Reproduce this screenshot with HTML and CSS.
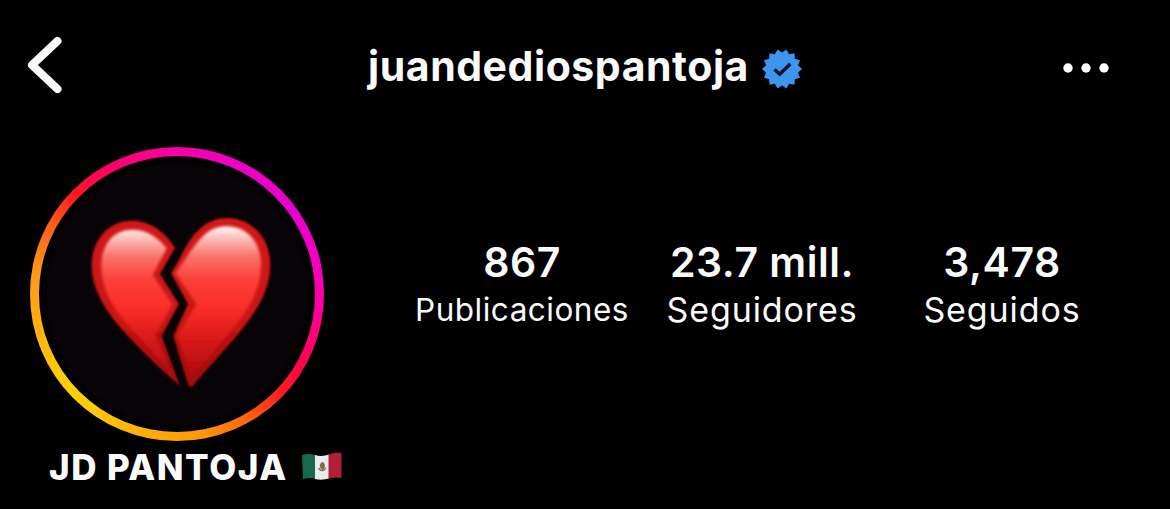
FILE: index.html
```html
<!DOCTYPE html>
<html lang="es">
<head>
    <meta charset="UTF-8" />
    <meta name="viewport" content="width=device-width, initial-scale=1.0" />
    <title>juandediospantoja</title>
    <link rel="stylesheet" href="styles.css">
</head>
<body>
    <header class="topbar">
        <svg class="back" viewBox="0 0 36 60" width="36" height="60">
            <path d="M30.5 6 L5 30 L30.5 54" fill="none" stroke="#fafafa" stroke-width="8" stroke-linecap="round" stroke-linejoin="round" />
        </svg>
        <div class="account">
            <h1 class="username">juandediospantoja</h1>
            <svg class="verified" viewBox="-20 -20 40 40" width="40" height="40">
                <path fill="#3c96f0" d="M0 -16.4 L4.45 -19.5 L7.12 -14.78 L12.47 -15.64 L12.82 -10.23 L18.02 -8.68 L15.99 -3.65 L20 0 L15.99 3.65 L18.02 8.68 L12.82 10.23 L12.47 15.64 L7.12 14.78 L4.45 19.5 L0 16.4 L-4.45 19.5 L-7.12 14.78 L-12.47 15.64 L-12.82 10.23 L-18.02 8.68 L-15.99 3.65 L-20 0 L-15.99 -3.65 L-18.02 -8.68 L-12.82 -10.23 L-12.47 -15.64 L-7.12 -14.78 L-4.45 -19.5 Z" />
                <path d="M-7.5 0.5 L-2.3 5.2 L8.3 -5" fill="none" stroke="#04101c" stroke-width="3.4" />
            </svg>
        </div>
        <svg class="more" viewBox="0 0 48 12" width="48" height="12">
            <circle cx="6" cy="6" r="4.7" fill="#fff" />
            <circle cx="24" cy="6" r="4.7" fill="#fff" />
            <circle cx="42" cy="6" r="4.7" fill="#fff" />
        </svg>
    </header>

    <main class="profile">
        <div class="avatar">
            <svg class="photo" viewBox="-123 -147 828 828">
                <defs>
                    <linearGradient id="edge" x1="0" y1="40" x2="0" y2="545" gradientUnits="userSpaceOnUse">
                        <stop offset="0" stop-color="#d31a15" />
                        <stop offset="0.6" stop-color="#c91412" />
                        <stop offset="1" stop-color="#a00808" />
                    </linearGradient>
                    <linearGradient id="body" x1="0" y1="65" x2="0" y2="530" gradientUnits="userSpaceOnUse">
                        <stop offset="0" stop-color="#fff4f2" />
                        <stop offset="0.09" stop-color="#fab4ae" />
                        <stop offset="0.2" stop-color="#fa6f67" />
                        <stop offset="0.34" stop-color="#fb4039" />
                        <stop offset="0.54" stop-color="#f92b27" />
                        <stop offset="0.72" stop-color="#d91a18" />
                        <stop offset="1" stop-color="#a80a0a" />
                    </linearGradient>
                    <filter id="soft" x="-10%" y="-10%" width="120%" height="120%">
                        <feGaussianBlur stdDeviation="5" />
                    </filter>
                    <filter id="trim" x="-10%" y="-10%" width="120%" height="120%">
                        <feGaussianBlur stdDeviation="3" />
                    </filter>
                </defs>
                <g fill="url(#edge)" filter="url(#trim)">
                    <path d="M285 128 C252 78 210 47 155 47 C85 47 35 105 35 182 C35 250 75 315 125 372 C175 430 240 490 300 544 L245 392 L297 297 L240 208 Z" />
                    <path d="M273 205 C290 180 295 165 312 136 C345 75 385 39 440 39 C515 39 571 98 571 180 C571 250 535 310 492 365 C445 425 390 480 335 547 L325 542 L280 393 L324 297 Z" />
                </g>
                <g fill="url(#body)" filter="url(#soft)">
                    <path d="M260 130 C232 95 200 74 156 74 C100 74 64 118 64 184 C64 245 92 300 136 350 C175 396 225 445 272 500 L226 390 L277 297 L218 210 Z" />
                    <path d="M286 204 C318 160 330 140 348 118 C375 82 400 64 440 64 C500 64 543 110 543 180 C543 240 515 300 475 350 C435 402 385 455 336 515 L292 393 L350 297 Z" />
                </g>
            </svg>
        </div>

        <ul class="stats">
            <li class="stat posts">
                <span class="count">867</span>
                <span class="label">Publicaciones</span>
            </li>
            <li class="stat followers">
                <span class="count">23.7 mill.</span>
                <span class="label">Seguidores</span>
            </li>
            <li class="stat following">
                <span class="count">3,478</span>
                <span class="label">Seguidos</span>
            </li>
        </ul>
    </main>

    <div class="bio">
        <h2 class="name">JD PANTOJA</h2>
        <svg class="flag" viewBox="0 0 40 30" width="40" height="30">
            <path fill="#17694f" d="M0 3 Q7 1 14 3 L14 27 Q7 25 1 27 Z" />
            <path fill="#ececec" d="M13 3 Q20 5 27 2.5 L27 26.5 Q20 28.5 13 27 Z" />
            <path fill="#b01e38" d="M26.5 2.5 Q33 0 39.5 1 L39.5 26 Q33 25 26.5 26.5 Z" />
            <path fill="none" stroke="#6b8a4a" stroke-width="1.5" d="M16.5 16 Q20 21 24 16" />
            <path fill="#8a6a48" d="M18 12 Q21 8 22.5 12 Q24 16 20.5 18 Q17 16 18 12 Z" />
        </svg>
    </div>
</body>
</html>
```
FILE: styles.css
```css
body {
    margin: 0;
    background-color: #000;
    color: #fafafa;
    font-family: Inter, "Liberation Sans", sans-serif;
}
h1, h2, ul {
    margin: 0;
    padding: 0;
}
.topbar {
    display: grid;
    grid-template-columns: 340px 1fr 340px;
    align-items: center;
    height: 137px;
}
.back {
    margin-left: 27px;
    margin-bottom: 7px;
}
.account {
    display: flex;
    align-items: center;
    justify-content: center;
    gap: 13px;
    white-space: nowrap;
}
.username {
    margin-bottom: 5px;
    font-size: 41px;
    font-weight: 700;
    line-height: 50px;
    letter-spacing: 0.55px;
}
.verified {
    flex: none;
}
.more {
    justify-self: end;
    margin-right: 60px;
    margin-bottom: 1px;
}
.profile {
    display: flex;
    padding: 10px 0 0 30px;
}
.avatar {
    box-sizing: border-box;
    width: 294px;
    height: 294px;
    padding: 9px;
    border-radius: 50%;
    background: conic-gradient(#f500a8, #ee00c4 25deg, #e600cf 55deg, #f400b8 80deg, #ff00a0 95deg, #ff0050 118deg, #ff1a20 133deg, #ff6210 150deg, #ff9a08 172deg, #ffb008 195deg, #ffcc08 218deg, #ffd008 232deg, #ffb010 255deg, #ff9a18 278deg, #ff5a18 300deg, #ff1424 315deg, #ff0068 332deg, #f500a8);
}
.photo {
    display: block;
    width: 276px;
    height: 276px;
    border-radius: 50%;
    background: radial-gradient(#070307 66%, #000 69%);
}
.stats {
    display: flex;
    padding: 90px 0 0 92px;
    list-style: none;
}
.stat {
    display: flex;
    flex-direction: column;
    align-items: center;
    white-space: nowrap;
}
.posts {
    width: 212px;
    margin-right: 37px;
}
.followers {
    width: 194px;
    margin-right: 64px;
}
.following {
    width: 158px;
}
.count {
    font-size: 41px;
    font-weight: 600;
    line-height: 50px;
    letter-spacing: 0.5px;
}
.label {
    margin-top: 2px;
    font-size: 34px;
    line-height: 42px;
    letter-spacing: 0.9px;
}
.posts .label {
    font-size: 31.5px;
    letter-spacing: 0.5px;
}
.bio {
    display: flex;
    align-items: center;
    gap: 14px;
    padding: 5px 0 0 49px;
}
.name {
    font-size: 35px;
    font-weight: 800;
    line-height: 42px;
    letter-spacing: 1.5px;
    white-space: nowrap;
}
```
